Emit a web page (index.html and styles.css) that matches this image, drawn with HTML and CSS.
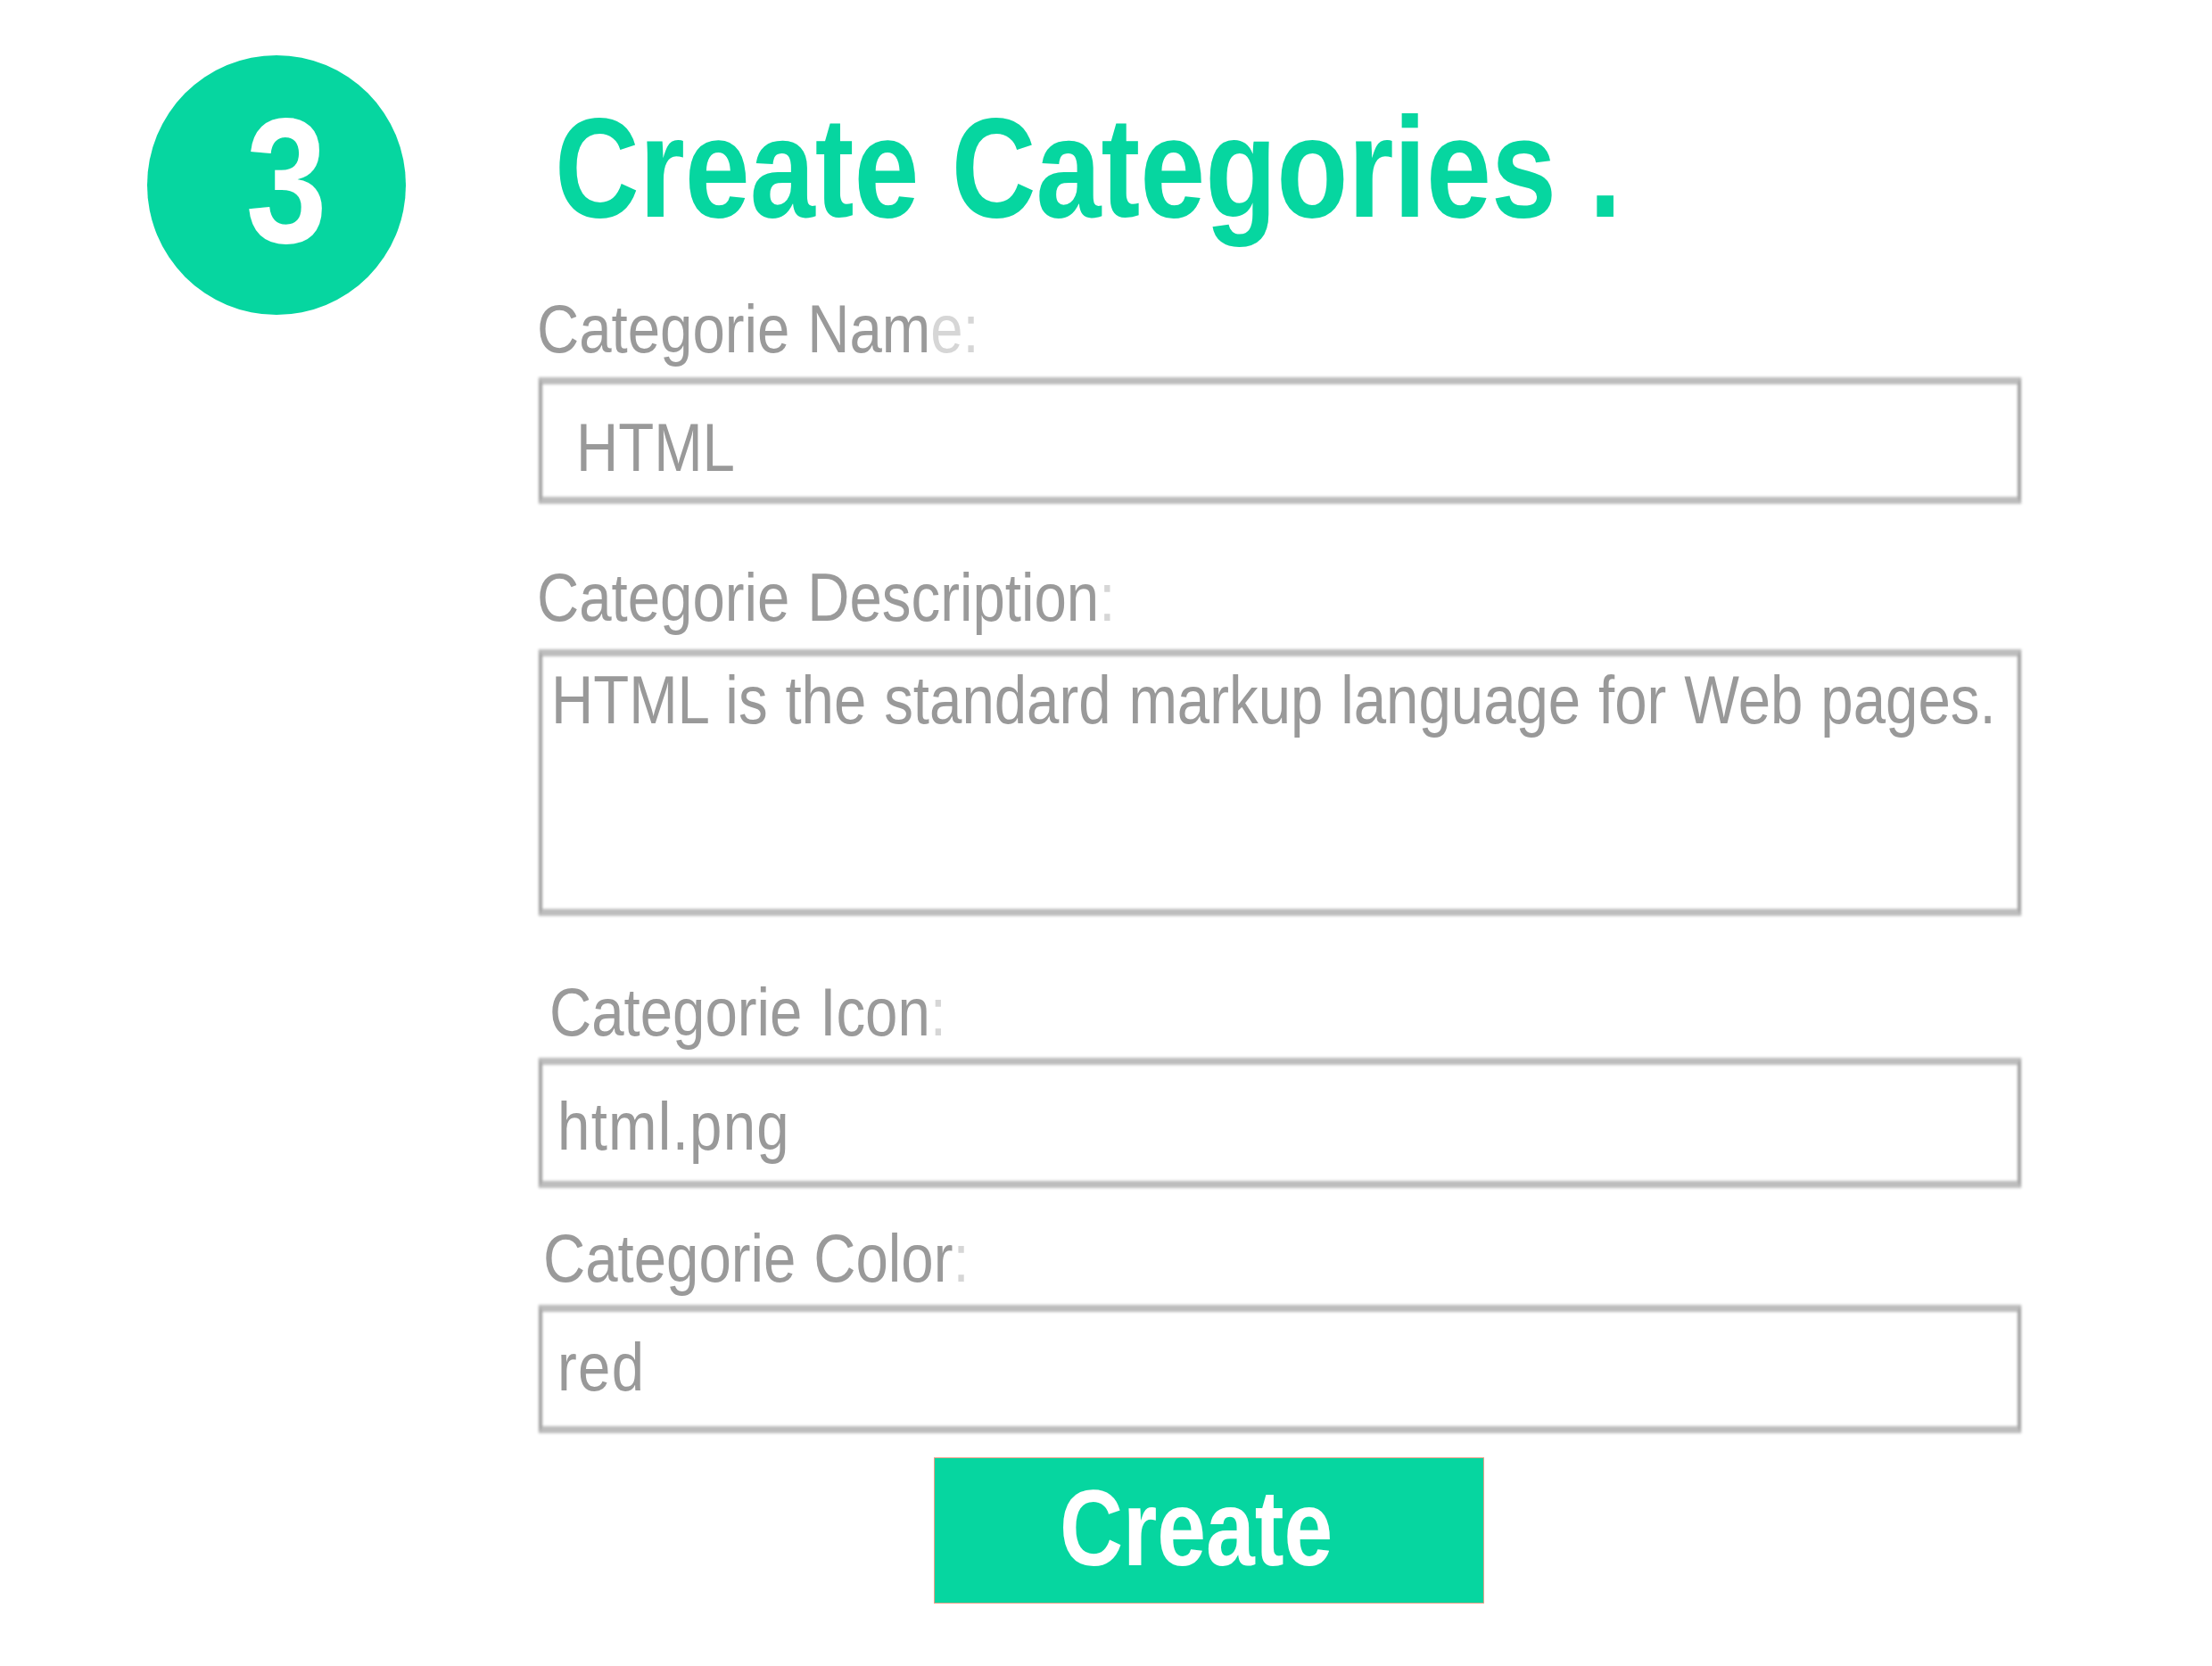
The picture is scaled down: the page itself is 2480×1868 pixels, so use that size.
FILE: index.html
```html
<!DOCTYPE html>
<html lang="en">
<head>
<meta charset="utf-8">
<title>Create Categories</title>
<link rel="stylesheet" href="styles.css">
</head>
<body>
<div class="page">
  <header class="header">
    <div class="step"><span class="step-num">3</span></div>
    <h1 class="title"><span class="narrow">Create Categories .</span></h1>
  </header>
  <form class="form">
    <div class="label label-name"><span class="narrow-r">Categorie Nam<span class="dim">e:</span></span></div>
    <div class="field field-name"><span class="narrow-r">HTML</span></div>

    <div class="label label-desc"><span class="narrow-r">Categorie Description<span class="dim">:</span></span></div>
    <div class="field field-desc"><span class="narrow-r wide-words">HTML is the standard markup language for Web pages.</span></div>

    <div class="label label-icon"><span class="narrow-r">Categorie Icon<span class="dim">:</span></span></div>
    <div class="field field-icon"><span class="narrow-r">html.png</span></div>

    <div class="label label-color"><span class="narrow-r">Categorie Color<span class="dim">:</span></span></div>
    <div class="field field-color"><span class="narrow-r">red</span></div>

    <div class="actions">
      <button type="button" class="btn"><span class="narrow">Create</span></button>
    </div>
  </form>
</div>
</body>
</html>
```
FILE: styles.css
```css
html, body {
  margin: 0;
  padding: 0;
  background: #ffffff;
}

.page {
  width: 2480px;
  height: 1868px;
  overflow: hidden;
  font-family: "Liberation Sans", Arial, sans-serif;
}

.narrow,
.narrow-r {
  display: inline-block;
  transform: scaleX(0.82);
  transform-origin: 0 50%;
  white-space: nowrap;
}

.narrow-r {
  transform: scaleX(0.86);
}

.header {
  display: flex;
  align-items: flex-start;
  padding-top: 62px;
  padding-left: 165px;
}

.step {
  width: 290px;
  height: 291px;
  border-radius: 50%;
  background: #06d6a0;
  display: flex;
  align-items: center;
  justify-content: center;
  flex-shrink: 0;
}

.step-num {
  display: inline-block;
  color: #ffffff;
  font-weight: 700;
  font-size: 200px;
  line-height: 200px;
  padding-left: 28px;
  padding-bottom: 10px;
  transform: scaleX(0.82);
}

.title {
  margin: 46px 0 0 167px;
  font-size: 160px;
  line-height: 160px;
  font-weight: 700;
  color: #06d6a0;
  white-space: nowrap;
}

.form {
  display: flex;
  flex-direction: column;
  align-items: flex-start;
  padding-left: 604px;
}

.label {
  font-size: 76px;
  line-height: 76px;
  color: #9a9a9a;
  word-spacing: 2px;
  white-space: nowrap;
}

.dim {
  color: #d6d6d6;
}

.label-name { margin-top: -22px; margin-left: -2px; }
.label-desc { margin-top: 67px; margin-left: -2px; }
.label-icon { margin-top: 70px; margin-left: 12px; }
.label-color { margin-top: 41px; margin-left: 5px; }

.field {
  position: relative;
  box-sizing: border-box;
  width: 1662px;
  font-size: 76px;
  line-height: 76px;
  color: #999999;
  white-space: nowrap;
}

.wide-words {
  word-spacing: 2px;
}

.field-icon .narrow-r,
.field-color .narrow-r {
  letter-spacing: 1.5px;
}

.field::before {
  content: "";
  position: absolute;
  inset: 0;
  border-style: solid;
  border-width: 8px 4px;
  border-color: #bdbdbd #a0a0a0;
  filter: blur(1.5px);
  pointer-events: none;
}

.field-name {
  margin-top: 16px;
  height: 142px;
  padding: 41px 0 0 42px;
}

.field-desc {
  margin-top: 20px;
  height: 299px;
  padding: 19px 0 0 14px;
}

.field-icon {
  margin-top: 13px;
  height: 146px;
  padding: 39px 0 0 21px;
}

.field-color {
  margin-top: 14px;
  height: 144px;
  padding: 32px 0 0 21px;
}

.actions {
  margin-top: 27px;
  margin-left: 443px;
}

.btn {
  display: block;
  box-sizing: border-box;
  width: 617px;
  height: 164px;
  margin: 0;
  padding: 0 0 6px 140px;
  text-align: left;
  background: #06d6a0;
  border: 1px solid #e8a08a;
  color: #ffffff;
  font-family: "Liberation Sans", Arial, sans-serif;
  font-weight: 700;
  font-size: 120px;
  line-height: 120px;
  cursor: pointer;
}
```
